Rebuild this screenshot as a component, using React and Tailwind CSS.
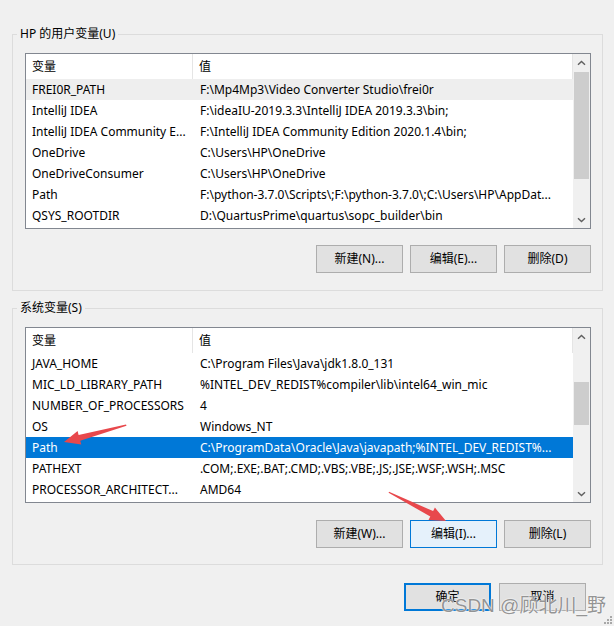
const USER_VARS = [
  { name: 'FREI0R_PATH', value: 'F:\\Mp4Mp3\\Video Converter Studio\\frei0r', hover: true },
  { name: 'IntelliJ IDEA', value: 'F:\\ideaIU-2019.3.3\\IntelliJ IDEA 2019.3.3\\bin;' },
  { name: 'IntelliJ IDEA Community E...', value: 'F:\\IntelliJ IDEA Community Edition 2020.1.4\\bin;' },
  { name: 'OneDrive', value: 'C:\\Users\\HP\\OneDrive' },
  { name: 'OneDriveConsumer', value: 'C:\\Users\\HP\\OneDrive' },
  { name: 'Path', value: 'F:\\python-3.7.0\\Scripts\\;F:\\python-3.7.0\\;C:\\Users\\HP\\AppDat...' },
  { name: 'QSYS_ROOTDIR', value: 'D:\\QuartusPrime\\quartus\\sopc_builder\\bin' },
];

const SYSTEM_VARS = [
  { name: 'JAVA_HOME', value: 'C:\\Program Files\\Java\\jdk1.8.0_131' },
  { name: 'MIC_LD_LIBRARY_PATH', value: '%INTEL_DEV_REDIST%compiler\\lib\\intel64_win_mic' },
  { name: 'NUMBER_OF_PROCESSORS', value: '4' },
  { name: 'OS', value: 'Windows_NT' },
  { name: 'Path', value: 'C:\\ProgramData\\Oracle\\Java\\javapath;%INTEL_DEV_REDIST%...', selected: true },
  { name: 'PATHEXT', value: '.COM;.EXE;.BAT;.CMD;.VBS;.VBE;.JS;.JSE;.WSF;.WSH;.MSC' },
  { name: 'PROCESSOR_ARCHITECT...', value: 'AMD64' },
];

function Chevron({ down }) {
  return (
    <svg width="9" height="6" viewBox="0 0 9 6" className="block">
      <path
        d={down ? 'M1 1.2 L4.5 4.6 L8 1.2' : 'M1 4.8 L4.5 1.4 L8 4.8'}
        fill="none"
        stroke="#606060"
        strokeWidth="1.4"
      />
    </svg>
  );
}

function ScrollBar({ thumbTop, thumbHeight }) {
  return (
    <div className="w-[17px] shrink-0 bg-[#f0f0f0] flex flex-col">
      <div className="h-[17px] flex items-center justify-center">
        <Chevron />
      </div>
      <div className="flex-1">
        <div className="mx-[1px] bg-[#cdcdcd]" style={{ marginTop: thumbTop, height: thumbHeight }} />
      </div>
      <div className="h-[17px] flex items-center justify-center">
        <Chevron down />
      </div>
    </div>
  );
}

function VarList({ rows, thumbTop, thumbHeight }) {
  return (
    <div className="h-[176px] border border-[#828790] bg-white flex overflow-hidden">
      <div className="flex-1 min-w-0">
        {/* header */}
        <div className="h-[25px] flex border-r border-[#e5e5e5]">
          <div className="w-[167px] shrink-0 pl-[6px] flex items-center border-r border-[#e5e5e5]">变量</div>
          <div className="flex-1 pl-[6px] flex items-center">值</div>
        </div>
        {rows.map((r) => (
          <div
            key={r.name}
            className={`h-[21px] flex items-center whitespace-nowrap ${
              r.selected ? 'bg-[#0078d7] text-white' : r.hover ? 'bg-[#eeeeee]' : ''
            }`}
          >
            <div className="w-[168px] shrink-0 pl-[6px] overflow-hidden">{r.name}</div>
            <div className="flex-1 pl-[6px] overflow-hidden">{r.value}</div>
          </div>
        ))}
      </div>
      <ScrollBar thumbTop={thumbTop} thumbHeight={thumbHeight} />
    </div>
  );
}

function Btn({ children, focused, isDefault }) {
  let cls = 'border border-[#adadad] bg-[#e1e1e1]';
  if (focused) cls = 'border border-[#0078d7] bg-[#e5f1fb]';
  if (isDefault) cls = 'border-2 border-[#0078d7] bg-[#e1e1e1]';
  return (
    <div className={`w-[87px] h-[28px] flex items-center justify-center ${cls}`}>{children}</div>
  );
}

function GroupBox({ title, children, className = '' }) {
  return (
    <fieldset className={`border border-[#dcdcdc] p-0 ${className}`}>
      <legend className="ml-[4px] px-[3px] leading-[16px]">{title}</legend>
      {children}
    </fieldset>
  );
}

export default function App() {
  return (
    <div className="relative w-[614px] h-[626px] overflow-hidden bg-[#f0f0f0] text-[12px] leading-[16px] text-black font-['Noto_Sans','Noto_Sans_CJK_SC',sans-serif] pt-[26px] pl-[12px] pr-[11px]">
      <GroupBox title="HP 的用户变量(U)">
        <div className="pt-[11px] pb-[17px] pl-[12px] pr-[11px]">
          <VarList rows={USER_VARS} thumbTop={1} thumbHeight={107} />
          <div className="mt-[16px] flex justify-end gap-[7px]">
            <Btn>新建(N)...</Btn>
            <Btn>编辑(E)...</Btn>
            <Btn>删除(D)</Btn>
          </div>
        </div>
      </GroupBox>

      <GroupBox title="系统变量(S)" className="mt-[9px]">
        <div className="pt-[11px] pb-[16px] pl-[12px] pr-[11px]">
          <VarList rows={SYSTEM_VARS} thumbTop={37} thumbHeight={43} />
          <div className="mt-[17px] flex justify-end gap-[7px]">
            <Btn>新建(W)...</Btn>
            <Btn focused>编辑(I)...</Btn>
            <Btn>删除(L)</Btn>
          </div>
        </div>
      </GroupBox>

      <div className="mt-[18px] mr-[17px] flex justify-end gap-[8px]">
        <Btn isDefault>确定</Btn>
        <Btn>取消</Btn>
      </div>

      {/* annotation arrows and size grip */}
      <svg className="absolute left-0 top-0 pointer-events-none" width="614" height="626" viewBox="0 0 614 626">
        <polygon
          points="126,424.5 78.6,434.9 77.6,431 64,442 81.3,444.5 80.2,440.7 126.5,425.8"
          fill="#e8484c"
        />
        <polygon
          points="389,491.8 433.1,511.1 434.9,507.6 446,521 428.5,520 430.3,516.5 388.6,492.8"
          fill="#e8484c"
        />
        <g fill="#a8a8a8">
          <rect x="610" y="616" width="2" height="2" />
          <rect x="607" y="619" width="2" height="2" />
          <rect x="610" y="619" width="2" height="2" />
          <rect x="604" y="622" width="2" height="2" />
          <rect x="607" y="622" width="2" height="2" />
          <rect x="610" y="622" width="2" height="2" />
        </g>
      </svg>

      <div className="absolute left-[441px] top-[595px] text-[19px] leading-[22px] whitespace-nowrap text-[#949494] pointer-events-none font-['Liberation_Sans','Noto_Sans_CJK_SC',sans-serif] [text-shadow:0_0_1px_#fff,0_0_2px_#fff]">
        CSDN @顾北川_野
      </div>
    </div>
  );
}
